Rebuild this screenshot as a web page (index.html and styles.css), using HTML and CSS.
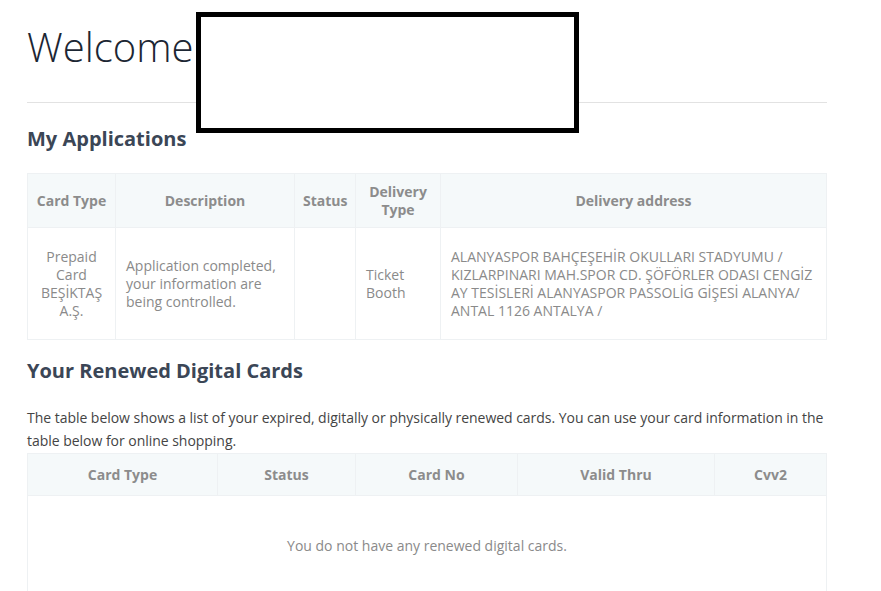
FILE: index.html
```html
<!DOCTYPE html>
<html>
<head>
<meta charset="utf-8">
<link rel="stylesheet" href="styles.css">
</head>
<body>
<div class="page">
  <h1 class="welcome">Welcome</h1>
  <hr class="rule">
  <h2 class="section-title">My Applications</h2>
  <table class="grid apps">
    <colgroup>
      <col class="c-a1"><col class="c-a2"><col class="c-a3"><col class="c-a4"><col>
    </colgroup>
    <thead>
      <tr><th>Card Type</th><th>Description</th><th>Status</th><th>Delivery Type</th><th>Delivery address</th></tr>
    </thead>
    <tbody>
      <tr>
        <td class="center">Prepaid Card BEŞİKTAŞ A.Ş.</td>
        <td>Application completed, your information are being controlled.</td>
        <td></td>
        <td>Ticket Booth</td>
        <td>ALANYASPOR BAHÇEŞEHİR OKULLARI STADYUMU / KIZLARPINARI MAH.SPOR CD. ŞÖFÖRLER ODASI CENGİZ AY TESİSLERİ ALANYASPOR PASSOLİG GİŞESİ ALANYA/ ANTAL 1126 ANTALYA /</td>
      </tr>
    </tbody>
  </table>
  <h2 class="section-title second">Your Renewed Digital Cards</h2>
  <p class="intro">The table below shows a list of your expired, digitally or physically renewed cards. You can use your card information in the table below for online shopping.</p>
  <table class="grid cards">
    <colgroup>
      <col class="c-b1"><col class="c-b2"><col class="c-b3"><col class="c-b4"><col>
    </colgroup>
    <thead>
      <tr><th>Card Type</th><th>Status</th><th>Card No</th><th>Valid Thru</th><th>Cvv2</th></tr>
    </thead>
    <tbody>
      <tr><td colspan="5" class="empty">You do not have any renewed digital cards.</td></tr>
    </tbody>
  </table>
  <div class="redact"></div>
</div>
</body>
</html>
```
FILE: styles.css
```css
html, body {
  margin: 0;
  padding: 0;
  background: #fff;
}
body {
  font-family: "Open Sans", "Liberation Sans", sans-serif;
}
.page {
  position: relative;
  width: 800px;
  padding: 19px 0 0 27px;
}
.welcome {
  font-weight: 300;
  font-size: 40px;
  line-height: 56px;
  color: #1c2633;
  margin: 0;
}
.rule {
  border: 0;
  border-top: 1px solid #e2e2e2;
  margin: 27px 0 0 0;
}
.section-title {
  font-size: 20px;
  font-weight: 700;
  color: #3b4656;
  margin: 22px 0 0 0;
  line-height: 28px;
}
.section-title.second {
  margin-top: 17px;
}
.grid {
  width: 800px;
  border-collapse: collapse;
  table-layout: fixed;
  font-size: 14px;
  color: #8a8a8a;
}
.c-a1 { width: 88px; }
.c-a2 { width: 179px; }
.c-a3 { width: 61px; }
.c-a4 { width: 85px; }
.c-b1 { width: 190px; }
.c-b2 { width: 138px; }
.c-b3 { width: 162px; }
.c-b4 { width: 197px; }
.apps {
  margin-top: 20px;
}
.grid th, .grid td {
  border: 1px solid #eef1f3;
}
.grid th {
  background: #f5f9fa;
  font-weight: 700;
  color: #8c8c8c;
  text-align: center;
  line-height: 18px;
  padding: 0 8px;
}
.apps th {
  height: 53px;
}
.cards th {
  height: 41px;
}
.grid td {
  line-height: 18px;
  padding: 10px 10px;
  vertical-align: middle;
}
.apps td {
  height: 91px;
}
.grid td.center {
  text-align: center;
}
.intro {
  font-size: 14px;
  line-height: 23px;
  color: #444;
  letter-spacing: -0.03px;
  margin: 21px 0 1px 0;
}
.cards td.empty {
  height: 120px;
  text-align: center;
  vertical-align: top;
  padding: 41px 10px 0;
}
.redact {
  position: absolute;
  left: 196px;
  top: 12px;
  width: 373px;
  height: 111px;
  border: 5px solid #000;
  background: #fff;
}
```
